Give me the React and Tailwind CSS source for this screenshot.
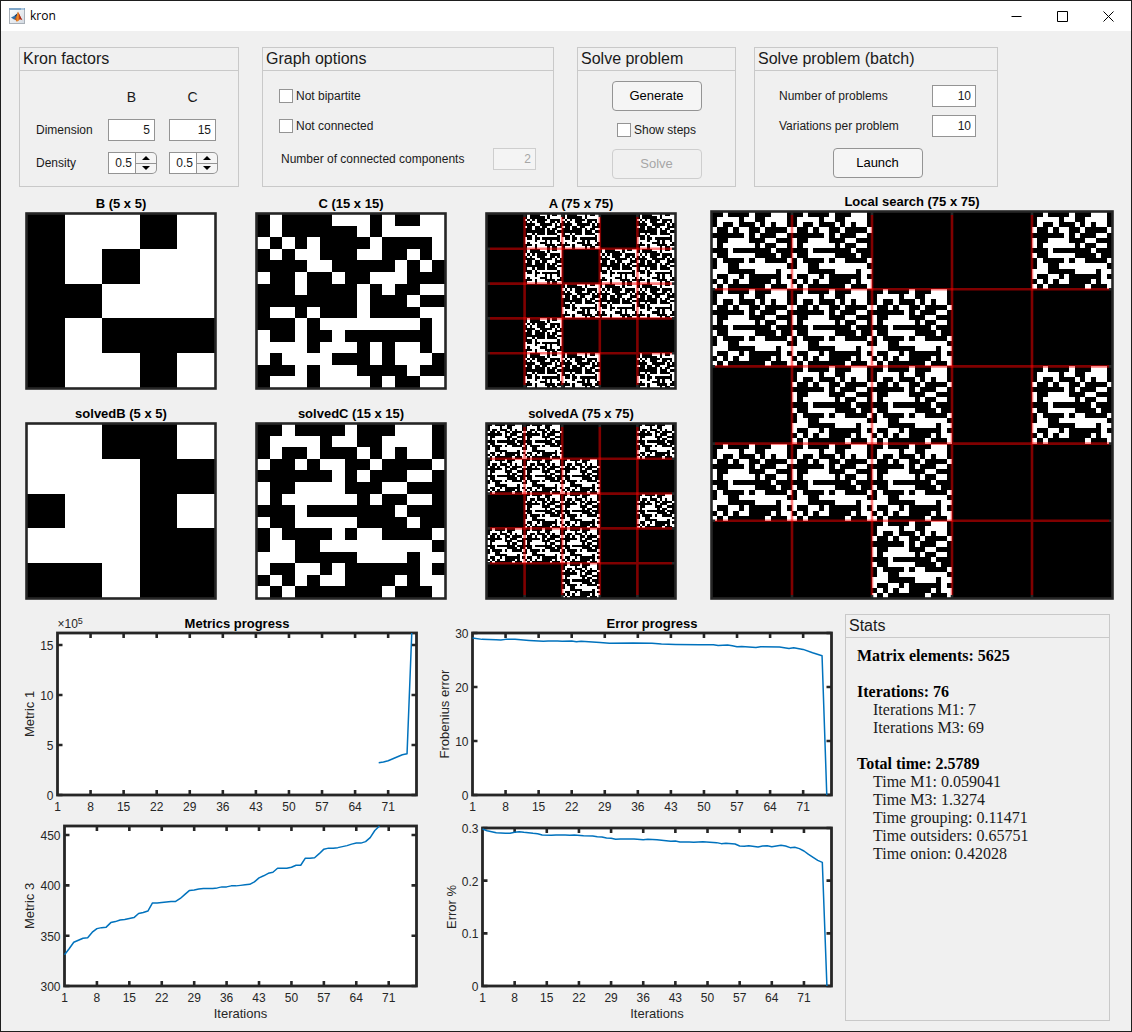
import React from "react";

const B = ["01101", "01011", "00111", "01000", "01101"];
const C = [
  "010000111010011",
  "010000001011111",
  "101010000100001",
  "010110001100101",
  "000011000001010",
  "100100100111000",
  "000100001010011",
  "000000001000100",
  "011010001000011",
  "000101111111101",
  "100100100000001",
  "111101110101101",
  "101111000101110",
  "000101110000100",
  "011101111010011",
];
const solvedB = ["11001", "11100", "01101", "11100", "00100"];
const solvedC = [
  "001000010001110",
  "011110110011110",
  "010010001010110",
  "100101100100001",
  "000000101000110",
  "100111100011000",
  "101111110100110",
  "000100000001000",
  "100111110000100",
  "010000101100001",
  "011001111111110",
  "111000001111011",
  "100110100000010",
  "010101100001011",
  "101000000010001",
];

function kron(p, q) {
  return p.flatMap((prow) =>
    q.map((qrow) => [...prow].map((v) => (v === "1" ? qrow : "0".repeat(qrow.length))).join(""))
  );
}

function cellsPath(rows) {
  let d = "";
  rows.forEach((row, y) => {
    for (const m of row.matchAll(/1+/g)) {
      d += `M${m.index} ${y}h${m[0].length}v1h-${m[0].length}z`;
    }
  });
  return d;
}

function Matrix({ title, rows, w = 192, h = 178, blocks = 0 }) {
  const n = rows.length;
  const sx = (w - 4) / n;
  const sy = (h - 4) / n;
  const steps = Array.from({ length: Math.max(blocks - 1, 0) }, (_, i) => i + 1);
  return (
    <figure>
      <figcaption className="pt-px text-center text-[13px] leading-4 font-bold text-black">{title}</figcaption>
      <svg viewBox={`0 0 ${w} ${h}`} className="block h-auto w-full" role="img" aria-label={title}>
        <rect x="1" y="1" width={w - 2} height={h - 2} fill="#000" />
        <path
          d={cellsPath(rows)}
          transform={`translate(2 2) scale(${sx} ${sy})`}
          fill="#fff"
          shapeRendering="crispEdges"
        />
        {steps.map((i) => {
          const x = 2 + ((w - 4) * i) / blocks;
          const y = 2 + ((h - 4) * i) / blocks;
          return (
            <g key={i} strokeWidth="2.6">
              <path d={`M${x} 1v4M${x} ${h - 1}v-4M1 ${y}h4M${w - 1} ${y}h-4`} stroke="#262626" />
              <path d={`M${x} 5V${h - 5}M5 ${y}H${w - 5}`} stroke="#f00" strokeOpacity="0.5" />
            </g>
          );
        })}
        <rect x="1.5" y="1.5" width={w - 3} height={h - 3} fill="none" stroke="#262626" strokeWidth="2.6" />
      </svg>
    </figure>
  );
}

const XTICKS = [1, 8, 15, 22, 29, 36, 43, 50, 57, 64, 71];

function Chart({ w, h, l, r, t, b, ymin, ymax, yticks, data, title, ylabel, ylabelX, xlabel, exponent }) {
  const px = (v) => l + ((v - 1) / 76) * (r - l);
  const py = (v) => b - ((v - ymin) / (ymax - ymin)) * (b - t);
  const mid = (l + r) / 2;
  let ticks = "";
  XTICKS.slice(1).forEach((v) => {
    ticks += `M${px(v)} ${b}v-5M${px(v)} ${t}v5`;
  });
  yticks.forEach((v) => {
    ticks += `M${l} ${py(v)}h5M${r} ${py(v)}h-5`;
  });
  return (
    <svg
      viewBox={`0 0 ${w} ${h}`}
      className="block h-auto w-full font-['Liberation_Sans',Arial,sans-serif]"
      role="img"
      aria-label={title || ylabel}
    >
      <rect x={l} y={t} width={r - l} height={b - t} fill="#fff" />
      <path d={ticks} stroke="#262626" strokeWidth="2.6" />
      <rect x={l} y={t} width={r - l} height={b - t} fill="none" stroke="#262626" strokeWidth="2.8" />
      <polyline
        points={data.map(([x, y]) => `${px(x)},${py(y)}`).join(" ")}
        fill="none"
        stroke="#0072bd"
        strokeWidth="1.5"
        strokeLinejoin="round"
      />
      <g fontSize="12" fill="#262626">
        {XTICKS.map((v) => (
          <text key={v} x={px(v)} y={b + 16} textAnchor="middle">
            {v}
          </text>
        ))}
        {yticks.map((v) => (
          <text key={v} x={l - 4} y={py(v) + 5} textAnchor="end">
            {v}
          </text>
        ))}
        {exponent && (
          <text x={l} y={t - 5}>
            ×10
            <tspan fontSize="9" dy="-4">
              {exponent}
            </tspan>
          </text>
        )}
      </g>
      {title && (
        <text x={mid} y={t - 5} textAnchor="middle" fontSize="13" fontWeight="bold" fill="#000">
          {title}
        </text>
      )}
      <text
        transform={`translate(${ylabelX} ${(t + b) / 2}) rotate(-90)`}
        textAnchor="middle"
        fontSize="13"
        fill="#262626"
      >
        {ylabel}
      </text>
      {xlabel && (
        <text x={mid} y={b + 32} textAnchor="middle" fontSize="13" fill="#262626">
          {xlabel}
        </text>
      )}
    </svg>
  );
}

const metric1 = [[69, 3.22], [70, 3.3], [71, 3.43], [72, 3.62], [73, 3.82], [74, 4.02], [75, 4.13], [76, 16.2]];
const metric3 = [
  331, 337, 343.5, 345.5, 347.5, 348, 353.5, 357, 358, 358.5, 363, 364, 365.5, 366, 367, 368, 372, 373, 374.5, 382.5,
  382.5, 383, 383.5, 384, 384, 387, 391, 395, 395.5, 396.5, 397, 397, 397, 397.5, 398.5, 398.5, 399.5, 399.5, 400,
  400.5, 401, 403.5, 407.5, 409.5, 412, 413, 417, 417, 417, 418, 420, 420, 427, 427, 427.5, 431.5, 436, 437, 437,
  437.5, 438.5, 439.5, 441, 442, 442, 443.5, 447.5, 454.5, 459,
].map((v, i) => [i + 1, v]);
const frobenius = [
  [1, 29.07], [3, 28.82], [6, 28.76], [7, 28.7], [8, 28.82], [10, 28.82], [13, 28.63], [15, 28.51], [16, 28.45],
  [17, 28.51], [19, 28.51], [20, 28.45], [22, 28.51], [23, 28.39], [24, 28.45], [28, 28.26], [30, 28.08], [35, 28.14],
  [39, 28.08], [41, 27.95], [44, 27.89], [49, 27.83], [52, 27.83], [53, 27.7], [55, 27.77], [56, 27.64], [57, 27.46],
  [58, 27.52], [61, 27.33], [62, 27.46], [66, 27.4], [68, 27.15], [69, 27.27], [71, 26.96], [73, 26.35], [75, 25.79],
  [76, 0],
];
const errorPct = [
  [1, 0.2981], [2, 0.2949], [3, 0.293], [4, 0.2911], [6, 0.2899], [7, 0.2899], [8, 0.2918], [9, 0.293], [10, 0.2918],
  [12, 0.2899], [13, 0.2892], [14, 0.2867], [16, 0.2861], [17, 0.2867], [19, 0.2867], [20, 0.2861], [21, 0.2867],
  [23, 0.2854], [25, 0.2848], [26, 0.2835], [27, 0.2829], [28, 0.281], [29, 0.2804], [30, 0.2785], [31, 0.2791],
  [34, 0.2791], [36, 0.2778], [37, 0.2785], [39, 0.2778], [41, 0.2759], [42, 0.2747], [43, 0.2753], [44, 0.2734],
  [46, 0.2734], [47, 0.2728], [49, 0.2741], [52, 0.2722], [53, 0.2703], [54, 0.2709], [56, 0.2696], [57, 0.2658],
  [58, 0.2652], [59, 0.2665], [61, 0.2639], [62, 0.2658], [63, 0.2665], [64, 0.2646], [66, 0.2671], [67, 0.2658],
  [68, 0.2627], [69, 0.2633], [70, 0.2608], [71, 0.2563], [72, 0.25], [73, 0.2443], [74, 0.2386], [75, 0.2348],
  [76, 0],
];

function Panel({ title, className, children }) {
  return (
    <section className={"border border-[#c9c9c9] " + className}>
      <h2 className="border-b border-[#c9c9c9] pl-[3px] text-base leading-[22px] text-[#1a1a1a]">{title}</h2>
      {children}
    </section>
  );
}

function NumberBox({ id, label, value, className, disabled }) {
  return (
    <input
      id={id}
      type="text"
      inputMode="numeric"
      aria-label={label}
      defaultValue={value}
      disabled={disabled}
      className={
        "h-[22px] border border-[#949494] bg-white pr-1 text-right text-xs text-[#1a1a1a] disabled:border-[#cecece] disabled:bg-[#f4f4f4] disabled:text-[#a6a6a6] " +
        className
      }
    />
  );
}

function Spinner({ label, value }) {
  return (
    <div className="flex h-[22px] w-[49px]">
      <input
        type="text"
        inputMode="decimal"
        aria-label={label}
        defaultValue={value}
        className="w-7 border border-[#949494] bg-white pr-[3px] text-right text-xs text-[#1a1a1a]"
      />
      <div className="flex flex-1 flex-col rounded-r-[5px] border border-l-0 border-[#949494] bg-[#f5f5f5]">
        <button type="button" aria-label={label + " up"} className="flex flex-1 items-center justify-center border-b border-[#949494]">
          <svg width="8" height="4" viewBox="0 0 8 4">
            <path d="M0 4 4 0l4 4z" />
          </svg>
        </button>
        <button type="button" aria-label={label + " down"} className="flex flex-1 items-center justify-center">
          <svg width="8" height="4" viewBox="0 0 8 4">
            <path d="M0 0h8L4 4z" />
          </svg>
        </button>
      </div>
    </div>
  );
}

function Check({ label }) {
  return (
    <label className="flex h-[22px] items-center gap-[3px] text-xs">
      <input type="checkbox" className="size-3.5 appearance-none border border-[#949494] bg-white checked:bg-[#7a7a7a]" />
      {label}
    </label>
  );
}

function PushButton({ children, disabled }) {
  return (
    <button
      type="button"
      disabled={disabled}
      className="h-[30px] w-[90px] rounded border border-[#949494] bg-[#f5f5f5] text-[13px] text-black disabled:border-[#cecece] disabled:bg-[#f0f0f0] disabled:text-[#a6a6a6]"
    >
      {children}
    </button>
  );
}

function MatlabIcon() {
  return (
    <svg width="16" height="16" viewBox="0 0 16 16" aria-hidden="true">
      <defs>
        <linearGradient id="frame" x1="0" y1="0" x2="1" y2="1">
          <stop offset="0" stopColor="#fff" />
          <stop offset="1" stopColor="#d3dae2" />
        </linearGradient>
        <linearGradient id="flame" x1="0" y1="0" x2="1" y2="0">
          <stop offset="0" stopColor="#7c1c14" />
          <stop offset="0.4" stopColor="#f08a24" />
          <stop offset="1" stopColor="#c0341a" />
        </linearGradient>
      </defs>
      <rect x="0.5" y="0.5" width="15" height="15" fill="url(#frame)" stroke="#a9b0b8" />
      <path d="M0 0h16v2H0z" fill="#7fa6c8" />
      <path d="M12 1h3" stroke="#dbe8f4" />
      <path d="M2 9.5 5.6 7.8 8 5.8 9 4 7.2 10.6 5 11.6z" fill="#2f6ea8" />
      <path d="M5.6 7.8 8 5.8 9 4 7.6 9z" fill="#173a66" />
      <path d="M9 3.6C10.4 6 11.6 9.4 13.4 12.2 11.8 10.8 10.8 11 9.8 12.4 9 13.4 8.2 13.8 7.4 13.4 7 12.2 6.2 11.6 5 11.6 7 10.6 8 6.4 9 3.6z" fill="url(#flame)" />
      <path d="M9.4 4.6C10.6 6.8 11.8 10 13.4 12.2 12.2 11.2 11.2 11 10.4 11.6 10.6 9 10 6.6 9.4 4.6z" fill="#a3261a" />
    </svg>
  );
}

function WindowButton({ label, d }) {
  return (
    <button type="button" aria-label={label} className="flex h-[30px] w-[46px] items-center justify-center">
      <svg width="11" height="11" viewBox="0 0 11 11" fill="none" stroke="#000">
        <path d={d} />
      </svg>
    </button>
  );
}

const stats = [
  { head: "Matrix elements: 5625", lines: [] },
  { head: "Iterations: 76", lines: ["Iterations M1: 7", "Iterations M3: 69"] },
  {
    head: "Total time: 2.5789",
    lines: [
      "Time M1: 0.059041",
      "Time M3: 1.3274",
      "Time grouping: 0.11471",
      "Time outsiders: 0.65751",
      "Time onion: 0.42028",
    ],
  },
];

export default function App() {
  return (
    <div className="min-h-screen border border-[#1e1e1e] bg-[#f0f0f0] font-['Liberation_Sans',Arial,sans-serif] text-[#1a1a1a]">
      <header className="flex h-[30px] items-center bg-white pl-2">
        <MatlabIcon />
        <h1 className="flex-1 pl-[5px] font-['Open_Sans','Noto_Sans',sans-serif] text-xs text-black">kron</h1>
        <WindowButton label="Minimize" d="M0.5 5.5h10" />
        <WindowButton label="Maximize" d="M0.5 0.5h10v10h-10z" />
        <WindowButton label="Close" d="M0.5 0.5l10 10M10.5 0.5l-10 10" />
      </header>

      <main className="pb-2.5">
        <div className="flex gap-[18px] pt-4 pr-[133px] pl-[18px]">
          <div className="flex flex-[717_1_0%] gap-[23px]">
            <Panel title="Kron factors" className="h-[140px] flex-[218_1_0%]">
              <div className="grid grid-cols-[72px_61px_1fr] gap-y-[11px] pt-[15px] pl-4 text-xs leading-[22px]">
                <span />
                <span className="w-[47px] text-center text-sm leading-[22px]">B</span>
                <span className="w-[47px] text-center text-sm leading-[22px]">C</span>
                <span>Dimension</span>
                <NumberBox label="Dimension of B" value="5" className="w-[47px]" />
                <NumberBox label="Dimension of C" value="15" className="w-[47px]" />
                <span>Density</span>
                <Spinner label="Density of B" value="0.5" />
                <Spinner label="Density of C" value="0.5" />
              </div>
            </Panel>
            <Panel title="Graph options" className="h-[140px] flex-[290_1_0%]">
              <div className="flex flex-col gap-2 pt-3.5 pr-[17px] pl-4">
                <Check label="Not bipartite" />
                <Check label="Not connected" />
                <div className="flex items-center justify-between pt-[3px] pl-0.5">
                  <label htmlFor="components" className="text-xs">
                    Number of connected components
                  </label>
                  <NumberBox id="components" value="2" className="w-[43px]" disabled />
                </div>
              </div>
            </Panel>
            <Panel title="Solve problem" className="h-[140px] flex-[157_1_0%]">
              <div className="flex flex-col items-center gap-2 pt-2.5">
                <PushButton>Generate</PushButton>
                <Check label="Show steps" />
                <PushButton disabled>Solve</PushButton>
              </div>
            </Panel>
          </div>
          <Panel title="Solve problem (batch)" className="h-[140px] flex-[242_1_0%]">
            <div className="flex flex-col gap-2 pt-3.5 pr-[21px] pl-6 text-xs">
              <div className="flex items-center justify-between">
                <label htmlFor="problems">Number of problems</label>
                <NumberBox id="problems" value="10" className="w-11" />
              </div>
              <div className="flex items-center justify-between">
                <label htmlFor="variations">Variations per problem</label>
                <NumberBox id="variations" value="10" className="w-11" />
              </div>
              <div className="flex justify-center pt-[3px]">
                <PushButton>Launch</PushButton>
              </div>
            </div>
          </Panel>
        </div>

        <div className="flex gap-[33px] pt-1.5 pr-[17px] pl-6">
          <div className="grid flex-[652_1_0%] grid-cols-3 gap-x-[38px] gap-y-[15px] pt-0.5">
            <Matrix title="B (5 x 5)" rows={B} />
            <Matrix title="C (15 x 15)" rows={C} />
            <Matrix title="A (75 x 75)" rows={kron(B, C)} blocks={5} />
            <Matrix title="solvedB (5 x 5)" rows={solvedB} />
            <Matrix title="solvedC (15 x 15)" rows={solvedC} />
            <Matrix title="solvedA (75 x 75)" rows={kron(solvedB, solvedC)} blocks={5} />
          </div>
          <div className="flex-[404_1_0%]">
            <Matrix title="Local search (75 x 75)" rows={kron(solvedB, solvedC)} w={404} h={390} blocks={5} />
          </div>
        </div>

        <div className="flex pt-3.5 pr-[21px] pl-[18px]">
          <div className="flex-[415_1_0%]">
            <Chart
              w={415} h={204} l={38.5} r={397.5} t={19} b={181}
              ymin={0} ymax={16.2} yticks={[0, 5, 10, 15]} data={metric1}
              title="Metrics progress" ylabel="Metric 1" ylabelX={15} exponent="5"
            />
            <Chart
              w={415} h={203} l={45.5} r={397.5} t={8} b={168}
              ymin={300} ymax={459} yticks={[300, 350, 400, 450]} data={metric3}
              ylabel="Metric 3" ylabelX={15} xlabel="Iterations"
            />
          </div>
          <div className="flex-[411_1_0%]">
            <Chart
              w={411} h={204} l={38.5} r={397.5} t={19} b={181}
              ymin={0} ymax={30} yticks={[0, 10, 20, 30]} data={frobenius}
              title="Error progress" ylabel="Frobenius error" ylabelX={15}
            />
            <Chart
              w={411} h={203} l={48.5} r={397.5} t={10} b={168}
              ymin={0} ymax={0.3} yticks={[0, 0.1, 0.2, 0.3]} data={errorPct}
              ylabel="Error %" ylabelX={22} xlabel="Iterations"
            />
          </div>
          <Panel title="Stats" className="flex-[263_1_0%]">
            <div className="flex flex-col gap-[18px] pt-[9px] pl-[11px] font-['Liberation_Serif','Times_New_Roman',serif] text-base leading-[18px]">
              {stats.map((s) => (
                <div key={s.head}>
                  <p className="font-bold text-black">{s.head}</p>
                  {s.lines.map((line) => (
                    <p key={line} className="pl-4">
                      {line}
                    </p>
                  ))}
                </div>
              ))}
            </div>
          </Panel>
        </div>
      </main>
    </div>
  );
}
